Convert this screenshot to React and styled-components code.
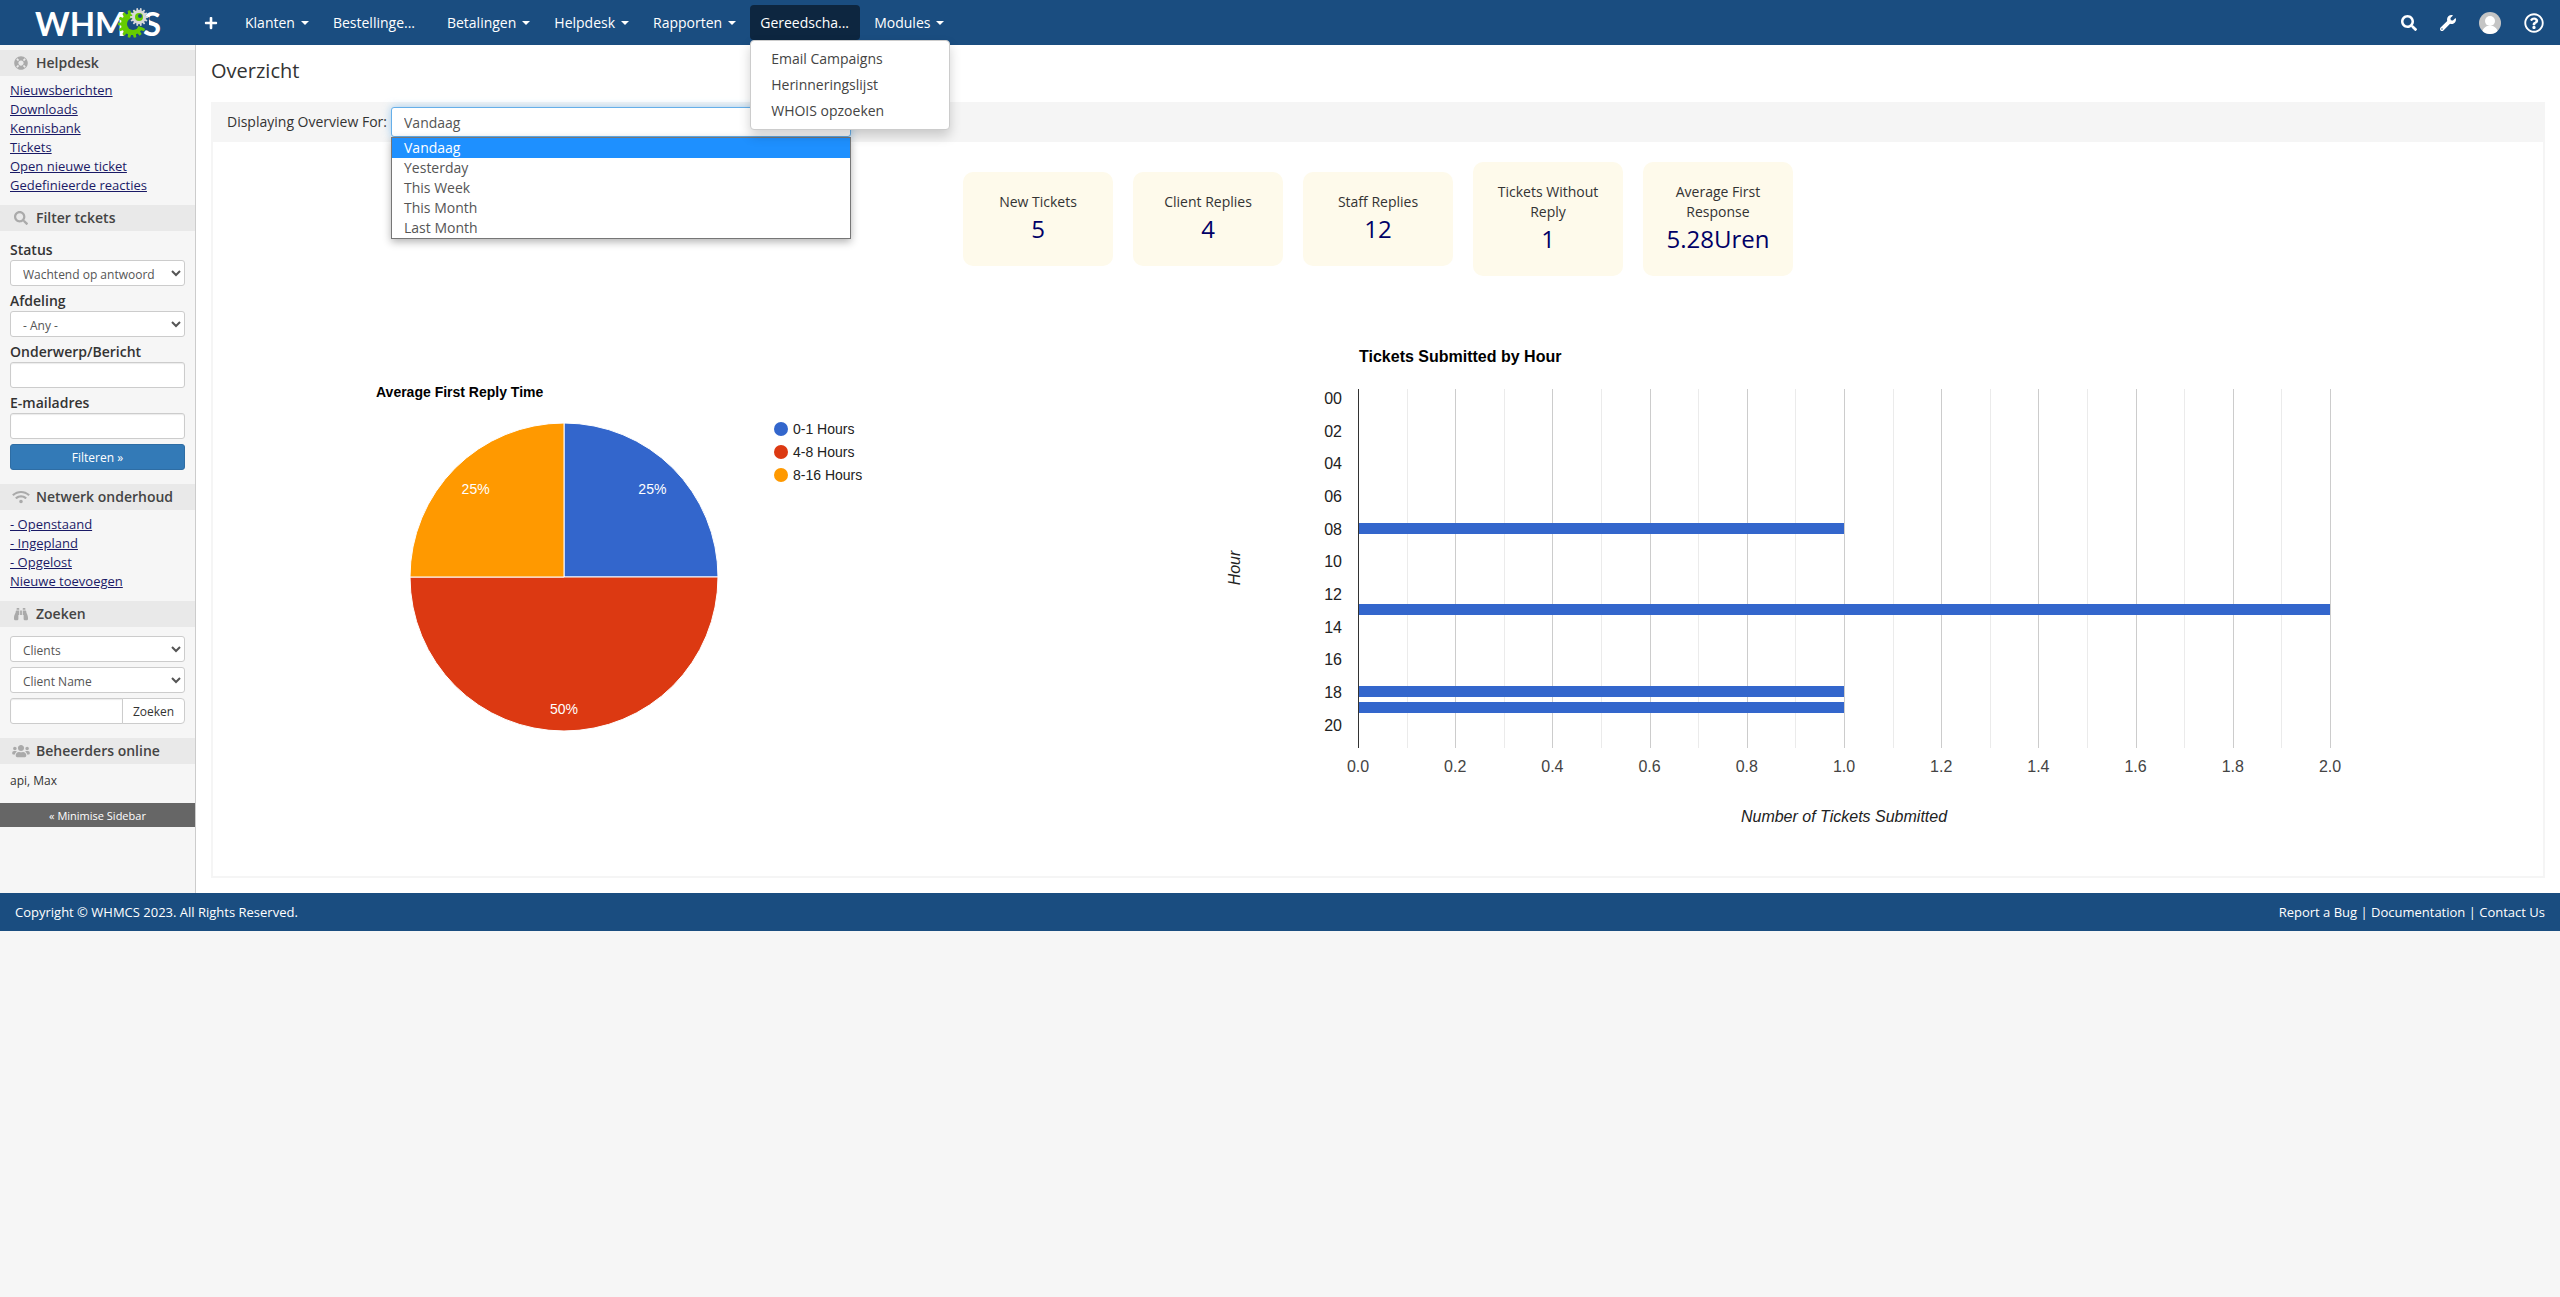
import React, { useState } from 'react'
import styled, { createGlobalStyle, css } from 'styled-components'
import {
  FaBinoculars,
  FaLifeRing,
  FaPlus,
  FaRegQuestionCircle,
  FaSearch,
  FaUsers,
  FaWifi,
  FaWrench,
} from 'react-icons/fa'

// data
const menu = [
  { label: 'Klanten' },
  { label: 'Bestellinge...', cut: true },
  { label: 'Betalingen' },
  { label: 'Helpdesk' },
  { label: 'Rapporten' },
  {
    label: 'Gereedscha...',
    cut: true,
    items: ['Email Campaigns', 'Herinneringslijst', 'WHOIS opzoeken'],
  },
  { label: 'Modules' },
]

const helpdeskLinks = [
  'Nieuwsberichten',
  'Downloads',
  'Kennisbank',
  'Tickets',
  'Open nieuwe ticket',
  'Gedefinieerde reacties',
]

const networkLinks = ['- Openstaand', '- Ingepland', '- Opgelost', 'Nieuwe toevoegen']

const periods = ['Vandaag', 'Yesterday', 'This Week', 'This Month', 'Last Month']

const stats = [
  { label: 'New Tickets', value: '5' },
  { label: 'Client Replies', value: '4' },
  { label: 'Staff Replies', value: '12' },
  { label: 'Tickets Without Reply', value: '1' },
  { label: 'Average First Response', value: '5.28Uren' },
]

const replyTimes = [
  { label: '0-1 Hours', share: 0.25, color: '#3366cc' },
  { label: '4-8 Hours', share: 0.5, color: '#dc3912' },
  { label: '8-16 Hours', share: 0.25, color: '#ff9900' },
]

const ticketsByHour = { 8: 1, 13: 2, 18: 1, 19: 1 }

// styling
const GlobalStyle = createGlobalStyle`
  * {
    box-sizing: border-box;
  }

  body {
    margin: 0;
    background-color: #f6f6f6;
    color: #333;
    font-family: 'Open Sans', sans-serif;
    font-size: 14px;
    line-height: 20px;
  }

  button,
  input,
  select {
    font-family: inherit;
  }
`

const Header = styled.header`
  display: flex;
  align-items: center;
  height: 45px;
  background-color: #1a4d80;
`

const Brand = styled.a`
  width: 194px;
  padding-left: 30px;
  line-height: 0;
`

const Menu = styled.nav`
  display: flex;
  flex: 1;
  gap: 4px;
`

const MenuItem = styled.div`
  position: relative;
`

const MenuButton = styled.button`
  display: flex;
  align-items: center;
  gap: 6px;
  height: 35px;
  padding: 0 10px;
  border: 0;
  border-radius: 4px;
  background-color: transparent;
  color: #fff;
  font-size: 14px;
  white-space: nowrap;

  ${({ $cut }) =>
    $cut &&
    css`
      width: 110px;
    `}

  ${({ $active }) =>
    $active &&
    css`
      background-color: #0d2640;
    `}
`

const PlusButton = styled(MenuButton)`
  width: 37px;
`

const Caret = styled.span`
  border-top: 4px solid #fff;
  border-right: 4px solid transparent;
  border-left: 4px solid transparent;
`

const Dropdown = styled.div`
  position: absolute;
  top: 100%;
  left: 0;
  z-index: 10;
  width: 200px;
  padding: 5px 0;
  border: 1px solid #ccc;
  border-radius: 4px;
  background-color: #fff;
  box-shadow: 0 6px 12px rgba(0, 0, 0, 0.18);
`

const DropdownLink = styled.a`
  display: block;
  padding: 3px 20px;
  color: #444;
  text-decoration: none;
`

const Tools = styled.div`
  display: flex;
  align-items: center;
  gap: 23px;
  padding-right: 16px;
`

const ToolButton = styled.button`
  display: flex;
  padding: 0;
  border: 0;
  background-color: transparent;
  color: #fff;
  font-size: ${({ $size }) => $size || 16}px;
`

const Body = styled.div`
  display: flex;
`

const Sidebar = styled.aside`
  flex: none;
  width: 196px;
  padding-top: 5px;
  border-right: 1px solid #ccc;
`

const SideTitle = styled.h2`
  display: flex;
  align-items: center;
  gap: 6px;
  height: 26px;
  margin: 0;
  padding-left: 12px;
  background-color: #e9e9e9;
  color: #444;
  font-size: 14px;
  font-weight: 600;

  svg {
    width: 18px;
    height: 14px;
    color: #aaa;
  }
`

const SideLinks = styled.ul`
  margin: 0;
  padding: 5px 10px 10px;
  list-style: none;
  font-size: 13px;
  line-height: 19px;
`

const SideLink = styled.a`
  color: #1a1a66;
`

const SideForm = styled.form`
  display: flex;
  flex-direction: column;
  gap: 5px;
  padding: 9px 10px 14px;
`

const Field = styled.label`
  display: block;
  font-weight: 600;
`

const control = css`
  display: block;
  width: 100%;
  height: 26px;
  border: 1px solid #ccc;
  border-radius: 3px;
  background-color: #fff;
  color: #555;
  font-size: 12px;
`

const SideSelect = styled.select`
  ${control}
  padding: 2px 0 0 8px;
`

const SideInput = styled.input`
  ${control}
  padding: 5px 10px;
  box-shadow: inset 0 1px 1px rgba(0, 0, 0, 0.08);
`

const FilterButton = styled.button`
  height: 26px;
  border: 1px solid #2e6da4;
  border-radius: 3px;
  background-color: #337ab7;
  color: #fff;
  font-size: 12px;
`

const SearchRow = styled.div`
  display: flex;

  input {
    flex: 1;
    min-width: 0;
    border-radius: 3px 0 0 3px;
  }
`

const SearchButton = styled.button`
  width: 63px;
  height: 26px;
  margin-left: -1px;
  border: 1px solid #ccc;
  border-radius: 0 4px 4px 0;
  background-color: #fff;
  color: #333;
  font-size: 12px;
`

const Online = styled.p`
  margin: 0;
  padding: 7px 10px 12px;
  font-size: 12px;
`

const MinimiseButton = styled.button`
  display: block;
  width: 100%;
  height: 24px;
  border: 0;
  background-color: #666;
  color: #fff;
  font-size: 11px;
`

const Content = styled.main`
  flex: 1;
  min-width: 0;
  padding: 11px 15px 15px;
  background-color: #fff;
`

const PageTitle = styled.h1`
  margin: 0 0 16px;
  font-size: 20px;
  font-weight: 400;
  line-height: 30px;
`

const Panel = styled.section`
  border: 2px solid #f5f5f5;
  border-top: 0;
`

const PanelHeader = styled.div`
  display: flex;
  align-items: center;
  gap: 4px;
  height: 40px;
  padding-left: 14px;
  background-color: #f5f5f5;
`

const Picker = styled.div`
  position: relative;
  width: 460px;
`

const PeriodSelect = styled.select`
  display: block;
  width: 100%;
  height: 30px;
  padding: 0 8px;
  border: 1px solid #66afe9;
  border-radius: 3px;
  background-color: #fff;
  box-shadow: 0 0 8px rgba(102, 175, 233, 0.6);
  color: #555;
  font-size: 14px;
`

const Options = styled.ul`
  position: absolute;
  top: 100%;
  left: 0;
  right: 0;
  z-index: 5;
  margin: 0;
  padding: 0;
  border: 1px solid #767676;
  background-color: #fff;
  box-shadow: 0 3px 8px rgba(0, 0, 0, 0.3);
  list-style: none;
`

const Option = styled.li`
  padding-left: 12px;
  color: ${({ $selected }) => ($selected ? '#fff' : '#555')};
  background-color: ${({ $selected }) => ($selected ? '#1e90ff' : '#fff')};
`

const Stats = styled.div`
  display: flex;
  justify-content: center;
  align-items: center;
  gap: 20px;
  padding: 20px;
`

const Stat = styled.div`
  width: 150px;
  padding: 20px;
  border-radius: 10px;
  background-color: #fefaeb;
  text-align: center;
`

const StatValue = styled.div`
  color: #006;
  font-size: 24px;
  line-height: 34px;
`

const Charts = styled.div`
  display: grid;
  grid-template-columns: 2fr 3fr;
`

const Chart = styled.svg`
  display: block;
  width: 100%;
  font-family: 'Liberation Sans', Arial, sans-serif;
`

const Footer = styled.footer`
  display: flex;
  justify-content: space-between;
  padding: 9px 15px;
  background-color: #1a4d80;
  color: #fff;
  font-size: 13px;
`

const FooterLink = styled.a`
  color: #fff;
  text-decoration: none;
`
//endstyling

const gearPath = (cx, cy, outer, inner, teeth) => {
  const step = (Math.PI * 2) / teeth
  const points = []
  for (let i = 0; i < teeth; i++) {
    const a = i * step
    ;[
      [inner, -0.32],
      [outer, -0.2],
      [outer, 0.2],
      [inner, 0.32],
    ].forEach(([r, k]) => {
      points.push(`${cx + r * Math.cos(a + k * step)} ${cy + r * Math.sin(a + k * step)}`)
    })
  }
  return `M${points.join('L')}Z`
}

const Logo = () => (
  <svg width='136' height='36' viewBox='0 0 136 36' role='img' aria-label='WHMCS'>
    <g fill='#fff' fontFamily='Lato, sans-serif' fontSize='33' fontWeight='700'>
      <text x='5' y='31'>
        WHM
      </text>
      <text x='113' y='31'>
        S
      </text>
    </g>
    <path d={gearPath(102, 19, 14, 11, 14)} fill='#6c0' />
    <circle cx='103' cy='19' r='6' fill='#1a4d80' />
    <path d='M103 19L119 12V24L111 22Z' fill='#1a4d80' />
    <path d={gearPath(109, 12, 9, 7, 14)} fill='#d8d8d8' />
    <circle cx='109' cy='12' r='4' fill='#6c0' />
    <circle cx='110' cy='11' r='2' fill='#1a4d80' />
  </svg>
)

const Avatar = () => (
  <svg width='22' height='22' viewBox='0 0 22 22'>
    <clipPath id='avatar'>
      <circle cx='11' cy='11' r='11' />
    </clipPath>
    <g clipPath='url(#avatar)'>
      <rect width='22' height='22' fill='#c5c5c5' />
      <circle cx='11' cy='9' r='5' fill='#fff' />
      <path d='M3 22C3 17 6 15 8 14H14C16 15 19 17 19 22Z' fill='#fff' />
    </g>
  </svg>
)

const TopBar = () => (
  <Header>
    <Brand href='#'>
      <Logo />
    </Brand>
    <Menu>
      <PlusButton aria-label='Nieuw'>
        <FaPlus />
      </PlusButton>
      {menu.map(({ label, cut, items }) => (
        <MenuItem key={label}>
          <MenuButton $cut={cut} $active={!!items}>
            {label}
            {!cut && <Caret />}
          </MenuButton>
          {items && (
            <Dropdown>
              {items.map((item) => (
                <DropdownLink href='#' key={item}>
                  {item}
                </DropdownLink>
              ))}
            </Dropdown>
          )}
        </MenuItem>
      ))}
    </Menu>
    <Tools>
      <ToolButton aria-label='Zoeken'>
        <FaSearch />
      </ToolButton>
      <ToolButton aria-label='Instellingen'>
        <FaWrench />
      </ToolButton>
      <ToolButton aria-label='Account'>
        <Avatar />
      </ToolButton>
      <ToolButton aria-label='Help' $size={20}>
        <FaRegQuestionCircle />
      </ToolButton>
    </Tools>
  </Header>
)

const LinkList = ({ links }) => (
  <SideLinks>
    {links.map((link) => (
      <li key={link}>
        <SideLink href='#'>{link}</SideLink>
      </li>
    ))}
  </SideLinks>
)

const SideBar = () => (
  <Sidebar>
    <SideTitle>
      <FaLifeRing /> Helpdesk
    </SideTitle>
    <LinkList links={helpdeskLinks} />

    <SideTitle>
      <FaSearch /> Filter tckets
    </SideTitle>
    <SideForm>
      <Field>
        Status
        <SideSelect>
          <option>Wachtend op antwoord</option>
        </SideSelect>
      </Field>
      <Field>
        Afdeling
        <SideSelect>
          <option>- Any -</option>
        </SideSelect>
      </Field>
      <Field>
        Onderwerp/Bericht
        <SideInput type='text' />
      </Field>
      <Field>
        E-mailadres
        <SideInput type='text' />
      </Field>
      <FilterButton type='button'>Filteren »</FilterButton>
    </SideForm>

    <SideTitle>
      <FaWifi /> Netwerk onderhoud
    </SideTitle>
    <LinkList links={networkLinks} />

    <SideTitle>
      <FaBinoculars /> Zoeken
    </SideTitle>
    <SideForm>
      <SideSelect aria-label='Type'>
        <option>Clients</option>
      </SideSelect>
      <SideSelect aria-label='Veld'>
        <option>Client Name</option>
      </SideSelect>
      <SearchRow>
        <SideInput type='text' aria-label='Zoekterm' />
        <SearchButton type='button'>Zoeken</SearchButton>
      </SearchRow>
    </SideForm>

    <SideTitle>
      <FaUsers /> Beheerders online
    </SideTitle>
    <Online>api, Max</Online>
    <MinimiseButton>« Minimise Sidebar</MinimiseButton>
  </Sidebar>
)

const PieChart = () => {
  const cx = 351
  const cy = 281
  const r = 154
  const point = (part, radius) => {
    const a = part * Math.PI * 2
    return [cx + radius * Math.sin(a), cy - radius * Math.cos(a)]
  }

  let start = 0
  const slices = replyTimes.map((slice) => {
    const from = start
    start += slice.share
    return { ...slice, from, to: start }
  })

  return (
    <Chart viewBox='0 0 932 580' fontSize='14'>
      <text x='163' y='101' fontWeight='700'>
        Average First Reply Time
      </text>
      {slices.map(({ label, share, color, from, to }) => {
        const [lx, ly] = point((from + to) / 2, share < 0.5 ? 125 : 132)
        return (
          <g key={label}>
            <path
              d={`M${cx} ${cy}L${point(from, r)}A${r} ${r} 0 0 1 ${point(to, r)}Z`}
              fill={color}
              stroke='#fff'
            />
            <text x={lx} y={ly + 5} fill='#fff' textAnchor='middle'>
              {share * 100}%
            </text>
          </g>
        )
      })}
      {replyTimes.map(({ label, color }, i) => (
        <g key={label}>
          <circle cx='568' cy={133 + i * 23} r='7' fill={color} />
          <text x='580' y={138 + i * 23} fill='#222'>
            {label}
          </text>
        </g>
      ))}
    </Chart>
  )
}

const BarChart = () => {
  const left = 213
  const top = 93
  const width = 972
  const height = 359
  const row = height / 22
  const rowY = (hour) => top + row * (hour + 0.5)
  const ticks = Array.from({ length: 21 }, (_, i) => i)
  const hours = Array.from({ length: 11 }, (_, i) => i * 2)

  return (
    <Chart viewBox='0 0 1398 580' fontSize='16'>
      <text x={left + 1} y='66' fontWeight='700'>
        Tickets Submitted by Hour
      </text>
      {ticks.map((i) => (
        <rect
          key={i}
          x={Math.round(left + (i * width) / 20)}
          y={top}
          width='1'
          height={height}
          fill={i % 2 ? '#ebebeb' : '#ccc'}
        />
      ))}
      {Object.entries(ticketsByHour).map(([hour, count]) => (
        <rect
          key={hour}
          x={left}
          y={Math.round(rowY(Number(hour)) - 5)}
          width={(count * width) / 2}
          height='11'
          fill='#3366cc'
        />
      ))}
      <rect x={left} y={top} width='1' height={height} fill='#333' />
      {hours.map((hour) => (
        <text key={hour} x='197' y={rowY(hour) + 7} fill='#222' textAnchor='end'>
          {String(hour).padStart(2, '0')}
        </text>
      ))}
      {ticks
        .filter((i) => i % 2 === 0)
        .map((i) => (
          <text key={i} x={left + (i * width) / 20} y='476' fill='#444' textAnchor='middle'>
            {(i / 10).toFixed(1)}
          </text>
        ))}
      <g fill='#222' fontStyle='italic' textAnchor='middle'>
        <text x={left + width / 2} y='526'>
          Number of Tickets Submitted
        </text>
        <text transform='translate(95 272) rotate(-90)'>Hour</text>
      </g>
    </Chart>
  )
}

const Overview = () => {
  const [period, setPeriod] = useState(periods[0])

  return (
    <Content>
      <PageTitle>Overzicht</PageTitle>
      <Panel>
        <PanelHeader>
          <label htmlFor='period'>Displaying Overview For:</label>
          <Picker>
            <PeriodSelect
              id='period'
              value={period}
              onChange={(e) => setPeriod(e.target.value)}
            >
              {periods.map((name) => (
                <option key={name}>{name}</option>
              ))}
            </PeriodSelect>
            <Options role='listbox'>
              {periods.map((name) => (
                <Option
                  key={name}
                  role='option'
                  aria-selected={name === period}
                  $selected={name === period}
                  onClick={() => setPeriod(name)}
                >
                  {name}
                </Option>
              ))}
            </Options>
          </Picker>
        </PanelHeader>
        <Stats>
          {stats.map(({ label, value }) => (
            <Stat key={label}>
              {label}
              <StatValue>{value}</StatValue>
            </Stat>
          ))}
        </Stats>
        <Charts>
          <PieChart />
          <BarChart />
        </Charts>
      </Panel>
    </Content>
  )
}

const App = () => {
  return (
    <>
      <GlobalStyle />
      <TopBar />
      <Body>
        <SideBar />
        <Overview />
      </Body>
      <Footer>
        <span>Copyright © WHMCS 2023. All Rights Reserved.</span>
        <span>
          <FooterLink href='#'>Report a Bug</FooterLink> |{' '}
          <FooterLink href='#'>Documentation</FooterLink> |{' '}
          <FooterLink href='#'>Contact Us</FooterLink>
        </span>
      </Footer>
    </>
  )
}

export default App
